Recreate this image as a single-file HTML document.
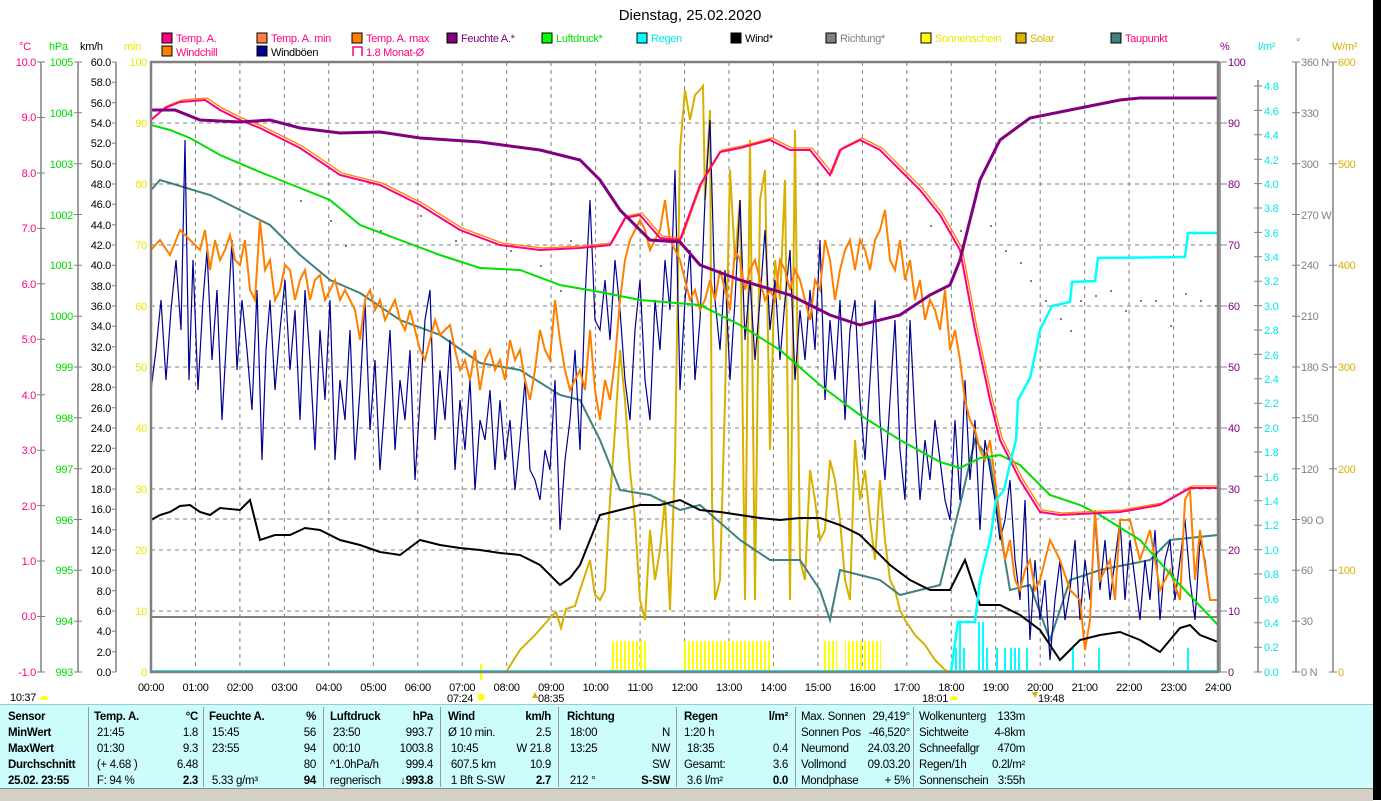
<!DOCTYPE html>
<html><head><meta charset="utf-8"><style>
html,body{margin:0;padding:0;background:#fff;width:1381px;height:800px;overflow:hidden;font-family:"Liberation Sans Narrow","Liberation Sans",sans-serif;}
svg{position:absolute;left:0;top:0}
svg text{font-family:"Liberation Sans Narrow","Liberation Sans",sans-serif;font-size:11px;letter-spacing:-0.3px}
#tbl{position:absolute;left:0;top:704px;width:1373px;height:84px;background:#ccfcfc;border-top:1px solid #9cc;}
.col{position:absolute;top:4px;font-size:11.5px;letter-spacing:-0.3px;line-height:16px;color:#000}
.row{display:flex;justify-content:space-between;white-space:nowrap;height:16px}
.b{font-weight:bold}
.sep{position:absolute;top:2px;width:1px;height:80px;background:#999}
#status{position:absolute;left:0;top:788px;width:1373px;height:12px;background:#d4d0c8;border-top:1px solid #888}
#blk{position:absolute;left:1373px;top:0;width:8px;height:800px;background:#000}
</style></head><body>
<svg width="1381" height="704" viewBox="0 0 1381 704">
<defs>
<pattern id="ys" width="4" height="10" patternUnits="userSpaceOnUse"><rect x="0" y="0" width="2" height="10" fill="#ffff00"/></pattern>
</defs>
<text x="690" y="20" text-anchor="middle" style="font-size:15px;letter-spacing:0">Dienstag, 25.02.2020</text>
<g>
<rect x="162" y="33" width="10" height="10" fill="#ff0080" stroke="#000"/><text x="176" y="42" fill="#ff0080">Temp. A.</text>
<rect x="162" y="46" width="10" height="10" fill="#ff8000" stroke="#000"/><text x="176" y="56" fill="#ff0080">Windchill</text>
<rect x="257" y="33" width="10" height="10" fill="#ff8040" stroke="#000"/><text x="271" y="42" fill="#ff0080">Temp. A. min</text>
<rect x="257" y="46" width="10" height="10" fill="#000090" stroke="#000"/><text x="271" y="56" fill="#000">Windböen</text>
<rect x="352" y="33" width="10" height="10" fill="#ff8000" stroke="#000"/><text x="366" y="42" fill="#ff0080">Temp. A. max</text>
<path d="M353 56V47H362V56" fill="none" stroke="#ff0080" stroke-width="1.5"/><text x="366" y="56" fill="#ff0080">1.8 Monat-Ø</text>
<rect x="447" y="33" width="10" height="10" fill="#800080" stroke="#000"/><text x="461" y="42" fill="#800080">Feuchte A.*</text>
<rect x="542" y="33" width="10" height="10" fill="#00ff00" stroke="#000"/><text x="556" y="42" fill="#00e000">Luftdruck*</text>
<rect x="637" y="33" width="10" height="10" fill="#00ffff" stroke="#000"/><text x="651" y="42" fill="#00e8e8">Regen</text>
<rect x="731" y="33" width="10" height="10" fill="#000" stroke="#000"/><text x="745" y="42" fill="#000">Wind*</text>
<rect x="826" y="33" width="10" height="10" fill="#808080" stroke="#000"/><text x="840" y="42" fill="#808080">Richtung*</text>
<rect x="921" y="33" width="10" height="10" fill="#ffff00" stroke="#000"/><text x="935" y="42" fill="#e8e800">Sonnenschein</text>
<rect x="1016" y="33" width="10" height="10" fill="#e0b000" stroke="#000"/><text x="1030" y="42" fill="#d8b000">Solar</text>
<rect x="1111" y="33" width="10" height="10" fill="#408080" stroke="#000"/><text x="1125" y="42" fill="#ff0080">Taupunkt</text>
</g>
<text x="19" y="50" fill="#ff0080">°C</text>
<text x="49" y="50" fill="#00e000">hPa</text>
<text x="80" y="50" fill="#000">km/h</text>
<text x="124" y="50" fill="#e8e800">min</text>
<text x="1220" y="50" fill="#800080">%</text>
<text x="1258" y="50" fill="#00e8e8">l/m²</text>
<text x="1296" y="46" fill="#808080">°</text>
<text x="1332" y="50" fill="#d8b000">W/m²</text>
<g stroke="#808080" stroke-width="1.5" fill="none">
<line x1="41" y1="62" x2="41" y2="672"/><line x1="78" y1="62" x2="78" y2="672"/><line x1="116" y1="62" x2="116" y2="672"/>
<line x1="1258" y1="80" x2="1258" y2="672"/><line x1="1296" y1="62" x2="1296" y2="672"/><line x1="1333" y1="62" x2="1333" y2="672"/>
</g>
<g stroke="#808080" stroke-width="1">
<path d="M37 62H45M37 117.5H45M37 173H45M37 228.4H45M37 283.8H45M37 339.3H45M37 394.7H45M37 450.2H45M37 505.6H45M37 561H45M37 616.5H45M37 672H45"/>
<path d="M74 62H82M74 112.8H82M74 163.7H82M74 214.5H82M74 265.3H82M74 316.2H82M74 367H82M74 417.8H82M74 468.7H82M74 519.5H82M74 570.3H82M74 621.2H82M74 672H82"/>
<path d="M1254 86H1262M1254 110.4H1262M1254 134.8H1262M1254 159.2H1262M1254 183.6H1262M1254 208H1262M1254 232.4H1262M1254 256.8H1262M1254 281.2H1262M1254 305.6H1262M1254 330H1262M1254 354.4H1262M1254 378.8H1262M1254 403.2H1262M1254 427.6H1262M1254 452H1262M1254 476.4H1262M1254 500.8H1262M1254 525.2H1262M1254 549.6H1262M1254 574H1262M1254 598.4H1262M1254 622.8H1262M1254 647.2H1262M1254 672H1262"/>
<path d="M1292 62H1300M1292 112.8H1300M1292 163.7H1300M1292 214.5H1300M1292 265.3H1300M1292 316.2H1300M1292 367H1300M1292 417.8H1300M1292 468.7H1300M1292 519.5H1300M1292 570.3H1300M1292 621.2H1300M1292 672H1300"/>
<path d="M1329 62H1337M1329 163.7H1337M1329 265.3H1337M1329 367H1337M1329 468.7H1337M1329 570.3H1337M1329 672H1337"/>
<path d="M1219 62H1227M1219 123H1227M1219 184H1227M1219 245H1227M1219 306H1227M1219 367H1227M1219 428H1227M1219 489H1227M1219 550H1227M1219 611H1227M1219 672H1227"/>
</g>
<g fill="#ff0080" text-anchor="end">
<text x="36" y="66">10.0</text><text x="36" y="121">9.0</text><text x="36" y="177">8.0</text><text x="36" y="232">7.0</text><text x="36" y="288">6.0</text><text x="36" y="343">5.0</text><text x="36" y="399">4.0</text><text x="36" y="454">3.0</text><text x="36" y="510">2.0</text><text x="36" y="565">1.0</text><text x="36" y="620">0.0</text><text x="36" y="676">-1.0</text>
</g>
<g fill="#00e000" text-anchor="end">
<text x="73" y="66">1005</text><text x="73" y="117">1004</text><text x="73" y="168">1003</text><text x="73" y="219">1002</text><text x="73" y="269">1001</text><text x="73" y="320">1000</text><text x="73" y="371">999</text><text x="73" y="422">998</text><text x="73" y="473">997</text><text x="73" y="524">996</text><text x="73" y="574">995</text><text x="73" y="625">994</text><text x="73" y="676">993</text>
</g>
<g fill="#000" text-anchor="end">
<text x="111" y="66">60.0</text><text x="111" y="86">58.0</text><text x="111" y="107">56.0</text><text x="111" y="127">54.0</text><text x="111" y="147">52.0</text><text x="111" y="168">50.0</text><text x="111" y="188">48.0</text><text x="111" y="208">46.0</text><text x="111" y="229">44.0</text><text x="111" y="249">42.0</text><text x="111" y="269">40.0</text><text x="111" y="290">38.0</text><text x="111" y="310">36.0</text><text x="111" y="330">34.0</text><text x="111" y="351">32.0</text><text x="111" y="371">30.0</text><text x="111" y="391">28.0</text><text x="111" y="412">26.0</text><text x="111" y="432">24.0</text><text x="111" y="452">22.0</text><text x="111" y="473">20.0</text><text x="111" y="493">18.0</text><text x="111" y="513">16.0</text><text x="111" y="534">14.0</text><text x="111" y="554">12.0</text><text x="111" y="574">10.0</text><text x="111" y="595">8.0</text><text x="111" y="615">6.0</text><text x="111" y="635">4.0</text><text x="111" y="656">2.0</text><text x="111" y="676">0.0</text>
</g>
<g stroke="#808080" stroke-width="1"><path d="M112 62h4M112 82.3h4M112 102.7h4M112 123h4M112 143.3h4M112 163.7h4M112 184h4M112 204.3h4M112 224.7h4M112 245h4M112 265.3h4M112 285.7h4M112 306h4M112 326.3h4M112 346.7h4M112 367h4M112 387.3h4M112 407.7h4M112 428h4M112 448.3h4M112 468.7h4M112 489h4M112 509.3h4M112 529.7h4M112 550h4M112 570.3h4M112 590.7h4M112 611h4M112 631.3h4M112 651.7h4M112 672h4"/></g>
<g fill="#e8e800" text-anchor="end">
<text x="147" y="66">100</text><text x="147" y="127">90</text><text x="147" y="188">80</text><text x="147" y="249">70</text><text x="147" y="310">60</text><text x="147" y="371">50</text><text x="147" y="432">40</text><text x="147" y="493">30</text><text x="147" y="554">20</text><text x="147" y="615">10</text><text x="147" y="676">0</text>
</g>
<g fill="#800080">
<text x="1228" y="66">100</text><text x="1228" y="127">90</text><text x="1228" y="188">80</text><text x="1228" y="249">70</text><text x="1228" y="310">60</text><text x="1228" y="371">50</text><text x="1228" y="432">40</text><text x="1228" y="493">30</text><text x="1228" y="554">20</text><text x="1228" y="615">10</text><text x="1228" y="676">0</text>
</g>
<g fill="#00e8e8">
<text x="1264" y="90">4.8</text><text x="1264" y="115">4.6</text><text x="1264" y="139">4.4</text><text x="1264" y="164">4.2</text><text x="1264" y="188">4.0</text><text x="1264" y="212">3.8</text><text x="1264" y="237">3.6</text><text x="1264" y="261">3.4</text><text x="1264" y="285">3.2</text><text x="1264" y="310">3.0</text><text x="1264" y="334">2.8</text><text x="1264" y="359">2.6</text><text x="1264" y="383">2.4</text><text x="1264" y="407">2.2</text><text x="1264" y="432">2.0</text><text x="1264" y="456">1.8</text><text x="1264" y="481">1.6</text><text x="1264" y="505">1.4</text><text x="1264" y="529">1.2</text><text x="1264" y="554">1.0</text><text x="1264" y="578">0.8</text><text x="1264" y="603">0.6</text><text x="1264" y="627">0.4</text><text x="1264" y="651">0.2</text><text x="1264" y="676">0.0</text>
</g>
<g fill="#808080">
<text x="1301" y="66">360 N</text><text x="1301" y="117">330</text><text x="1301" y="168">300</text><text x="1301" y="219">270 W</text><text x="1301" y="269">240</text><text x="1301" y="320">210</text><text x="1301" y="371">180 S</text><text x="1301" y="422">150</text><text x="1301" y="473">120</text><text x="1301" y="524">90 O</text><text x="1301" y="574">60</text><text x="1301" y="625">30</text><text x="1301" y="676">0 N</text>
</g>
<g fill="#d8b000">
<text x="1338" y="66">600</text><text x="1338" y="168">500</text><text x="1338" y="269">400</text><text x="1338" y="371">300</text><text x="1338" y="473">200</text><text x="1338" y="574">100</text><text x="1338" y="676">0</text>
</g>
<g stroke="#808080" stroke-width="1" stroke-dasharray="4,4">
<path d="M151 123H1218M151 184H1218M151 245H1218M151 306H1218M151 367H1218M151 428H1218M151 489H1218M151 550H1218M151 611H1218M151 519H1218"/>
<path d="M195.5 62V672M239.9 62V672M284.4 62V672M328.8 62V672M373.3 62V672M417.8 62V672M462.2 62V672M506.7 62V672M551.1 62V672M595.6 62V672M640.1 62V672M684.5 62V672M729 62V672M773.4 62V672M817.9 62V672M862.4 62V672M906.8 62V672M951.3 62V672M995.7 62V672M1040.2 62V672M1084.7 62V672M1129.1 62V672M1173.6 62V672"/>
</g>
<line x1="151" y1="617" x2="1218" y2="617" stroke="#808080" stroke-width="2"/>
<rect x="611" y="641" width="36" height="31" fill="url(#ys)"/>
<rect x="682" y="641" width="90" height="31" fill="url(#ys)"/>
<rect x="823" y="641" width="14" height="31" fill="url(#ys)"/>
<rect x="845" y="641" width="36" height="31" fill="url(#ys)"/>
<line x1="481" y1="664" x2="481" y2="680" stroke="#ffff00" stroke-width="2"/>
<g fill="#00ffff">
<rect x="955" y="648" width="2" height="24"/><rect x="959" y="622" width="2" height="50"/><rect x="963" y="648" width="2" height="24"/>
<rect x="978" y="622" width="2" height="50"/><rect x="982" y="622" width="2" height="50"/><rect x="986" y="648" width="2" height="24"/>
<rect x="996" y="648" width="2" height="24"/><rect x="1004" y="648" width="2" height="24"/><rect x="1010" y="648" width="2" height="24"/><rect x="1014" y="648" width="2" height="24"/><rect x="1018" y="648" width="2" height="24"/><rect x="1026" y="648" width="2" height="24"/>
<rect x="1072" y="648" width="2" height="24"/><rect x="1098" y="648" width="2" height="24"/><rect x="1187" y="648" width="2" height="24"/>
</g>
<line x1="151" y1="671" x2="1218" y2="671" stroke="#00ffff" stroke-width="2"/>
<g fill="#808080">
<rect x="300" y="200" width="2" height="2"/><rect x="330" y="220" width="2" height="2"/><rect x="345" y="245" width="2" height="2"/><rect x="380" y="230" width="2" height="2"/><rect x="420" y="215" width="2" height="2"/><rect x="455" y="240" width="2" height="2"/><rect x="510" y="250" width="2" height="2"/><rect x="540" y="265" width="2" height="2"/><rect x="570" y="240" width="2" height="2"/><rect x="560" y="290" width="2" height="2"/>
<rect x="930" y="225" width="2" height="2"/><rect x="960" y="230" width="2" height="2"/><rect x="990" y="225" width="2" height="2"/><rect x="1005" y="250" width="2" height="2"/><rect x="1020" y="262" width="2" height="2"/><rect x="1030" y="280" width="2" height="2"/><rect x="1045" y="300" width="2" height="2"/><rect x="1060" y="318" width="2" height="2"/><rect x="1070" y="330" width="2" height="2"/><rect x="1080" y="300" width="2" height="2"/><rect x="1095" y="295" width="2" height="2"/><rect x="1110" y="290" width="2" height="2"/><rect x="1125" y="310" width="2" height="2"/><rect x="1140" y="300" width="2" height="2"/><rect x="1155" y="300" width="2" height="2"/><rect x="1170" y="325" width="2" height="2"/><rect x="1185" y="293" width="2" height="2"/><rect x="1200" y="300" width="2" height="2"/><rect x="1215" y="305" width="2" height="2"/>
</g>
<polyline fill="none" stroke="#d8b000" stroke-width="2" points="506,672 520,650 535,635 550,618 556,612 561,628 566,609 575,606 580,590 590,560 595,595 600,600 605,590 610,500 615,430 620,350 625,400 630,470 635,520 640,600 645,620 650,530 655,580 660,550 665,500 670,610 675,460 680,150 685,90 690,120 695,95 700,90 703,86 705,200 710,110 712,500 715,600 720,580 725,400 730,170 735,260 740,200 745,600 750,140 755,600 760,200 765,170 770,450 775,260 780,300 785,180 790,600 795,130 800,560 805,580 810,470 815,500 820,540 825,530 830,460 835,480 840,520 845,580 850,600 855,440 860,500 865,470 870,520 875,560 880,480 885,540 890,580 895,590 900,610 905,620 915,635 925,645 935,660 945,670 950,672"/>
<polyline fill="none" stroke="#408080" stroke-width="2" points="151,190 160,180 180,186 210,195 240,210 270,225 300,255 330,280 360,293 400,320 440,335 480,363 520,370 560,395 580,400 600,440 620,490 650,495 680,510 700,505 740,540 770,560 800,560 820,590 830,620 840,570 880,580 900,595 940,585 960,505 975,440 990,460 1000,530 1010,590 1030,585 1050,640 1070,580 1100,570 1150,560 1170,540 1218,535"/>
<polyline fill="none" stroke="#000090" stroke-width="1.2" points="151,390 156,350 161,300 166,380 171,310 176,260 181,330 185,140 189,380 193,260 198,390 203,300 207,250 212,360 217,290 222,420 227,330 232,240 237,370 242,300 247,350 252,410 257,290 262,460 266,350 270,300 275,390 280,330 285,280 290,370 295,310 300,420 305,290 310,360 315,450 320,330 325,400 330,300 335,460 340,380 345,420 350,330 355,460 360,390 365,300 370,430 375,360 380,470 385,400 390,330 395,450 400,380 405,420 410,350 415,480 420,400 425,320 430,290 435,440 440,370 445,420 450,340 455,470 460,400 465,450 470,380 475,490 480,420 485,440 490,390 495,470 500,400 505,460 510,420 515,490 520,440 525,380 530,470 535,480 540,500 545,450 550,470 555,380 560,530 565,460 570,420 575,350 580,450 585,300 590,200 595,320 600,330 605,280 610,340 615,260 620,310 625,380 630,420 635,330 640,280 645,380 650,420 655,300 660,350 665,260 670,310 675,170 680,390 685,300 690,250 695,380 700,320 705,200 710,120 715,300 720,350 725,270 730,380 735,300 740,200 745,340 750,280 755,360 760,300 765,230 770,330 775,280 780,360 785,300 790,250 795,380 800,310 805,360 810,290 815,350 820,240 825,400 830,320 835,380 840,300 845,420 850,330 855,300 860,400 865,460 870,380 875,300 880,420 885,480 890,400 895,320 900,450 905,500 910,320 915,420 920,500 925,440 930,480 935,420 940,460 945,500 950,520 955,420 960,500 965,380 970,480 975,420 980,530 985,440 990,470 995,500 1000,540 1005,520 1010,480 1015,560 1020,600 1025,500 1030,640 1035,560 1040,620 1045,580 1050,660 1055,600 1060,560 1065,620 1070,590 1075,540 1080,620 1085,560 1090,600 1095,520 1100,590 1105,540 1110,600 1115,560 1120,520 1125,600 1130,540 1135,580 1140,620 1145,560 1150,600 1155,530 1160,620 1165,560 1170,540 1175,600 1180,560 1185,520 1190,580 1195,620 1200,540 1205,560 1210,600 1215,600"/>
<polyline fill="none" stroke="#ff8000" stroke-width="2" points="151,250 160,240 170,255 180,230 190,240 200,250 205,230 210,270 215,240 220,260 225,250 230,235 235,260 240,265 245,240 250,290 255,300 260,220 265,270 270,260 275,300 280,290 285,265 290,270 295,300 300,280 305,270 310,300 315,280 320,275 325,300 330,290 335,280 340,300 345,290 350,300 355,310 360,340 365,300 370,290 375,310 380,300 385,320 390,310 395,300 400,320 405,330 410,310 415,330 420,350 425,360 430,340 435,320 440,335 445,330 450,325 455,350 460,370 465,360 470,380 475,350 480,390 485,360 490,350 495,370 500,360 505,380 510,340 515,360 520,350 525,380 530,400 535,370 540,330 545,350 550,360 555,300 560,340 565,370 570,390 575,380 580,370 585,390 590,330 595,390 600,420 605,380 610,400 615,360 620,300 625,260 630,240 635,230 640,220 645,230 650,250 655,240 660,230 665,200 670,240 675,250 680,260 685,280 690,300 695,290 700,310 705,300 710,280 715,300 720,270 725,290 730,310 735,250 740,260 745,290 750,270 755,260 760,280 765,300 770,290 775,300 780,260 785,270 790,290 795,270 800,280 805,300 810,320 815,280 820,290 825,240 830,260 835,300 840,270 845,250 850,240 855,270 860,240 865,250 870,270 875,240 880,230 885,210 890,260 895,270 900,240 905,280 910,260 915,300 920,280 925,320 930,300 935,310 940,330 945,290 950,350 955,330 960,360 965,400 970,420 975,430 980,450 985,460 990,440 995,480 1000,520 1005,560 1010,540 1015,580 1020,590 1025,570 1030,560 1035,590 1040,580 1050,540 1060,560 1070,590 1080,600 1085,650 1090,620 1095,510 1100,580 1110,560 1115,600 1120,520 1130,520 1140,560 1150,530 1160,590 1170,570 1180,600 1185,500 1190,490 1195,580 1200,530 1210,600 1218,600"/>
<polyline fill="none" stroke="#000" stroke-width="2" points="151,520 160,515 170,512 180,506 190,505 200,512 210,515 220,508 240,510 250,500 260,540 275,535 290,535 305,528 320,530 340,540 360,545 380,552 400,555 420,540 440,545 460,548 480,550 500,553 520,555 540,565 560,585 570,578 580,565 600,515 620,510 640,505 660,505 680,500 700,510 720,512 740,515 760,518 780,520 800,518 820,518 840,525 860,535 875,550 890,565 910,580 930,590 950,590 965,560 975,590 980,605 1000,605 1020,615 1040,630 1060,660 1070,650 1080,640 1100,635 1120,632 1140,640 1160,652 1170,640 1180,628 1190,625 1200,635 1218,642"/>
<polyline fill="none" stroke="#00e000" stroke-width="2" points="151,125 170,130 190,138 220,155 260,172 300,188 330,200 360,225 400,240 440,255 480,268 520,270 560,285 600,292 640,300 700,305 740,325 780,350 820,385 860,415 900,440 940,462 960,468 980,458 1000,455 1020,465 1050,495 1080,505 1100,515 1140,540 1180,585 1218,625"/>
<polyline fill="none" stroke="#ff8000" stroke-width="1.3" points="153,118 167,106 182,100 207,98 222,108 242,118 262,126 282,136 302,146 342,173 382,183 422,203 462,228 502,243 542,248 582,246 612,243 627,216 642,213 662,236 682,238 702,183 722,150 742,146 772,138 792,148 812,148 832,173 842,148 862,138 882,148 902,168 922,188 942,213 962,248 977,328 992,398 1002,438 1022,478 1042,510 1062,513 1122,510 1162,503 1192,486 1218,486"/>
<polyline fill="none" stroke="#ff0080" stroke-width="2" points="151,120 165,108 180,102 205,100 220,110 240,120 260,128 280,138 300,148 340,175 380,185 420,205 460,230 500,245 540,250 580,248 610,245 625,218 640,215 660,238 680,240 700,185 720,152 740,148 770,140 790,150 810,150 830,175 840,150 860,140 880,150 900,170 920,190 940,215 960,250 975,330 990,400 1000,440 1020,480 1040,512 1060,515 1120,512 1160,505 1190,488 1218,488"/>
<polyline fill="none" stroke="#800080" stroke-width="3" points="151,110 175,110 200,120 240,122 270,120 300,128 340,133 380,132 420,138 480,142 540,150 580,160 600,180 620,210 650,240 680,242 700,265 740,280 790,295 830,315 860,325 900,315 930,295 950,285 960,260 980,180 1000,140 1030,118 1080,108 1120,100 1140,98 1218,98"/>
<polyline fill="none" stroke="#00ffff" stroke-width="2.5" points="951,672 958,622 975,622 980,580 990,540 996,500 1004,490 1012,455 1016,440 1018,400 1030,378 1035,355 1040,330 1052,306 1070,302 1072,282 1095,281 1098,258 1185,257 1188,233 1218,233"/>
<rect x="151" y="62" width="1067" height="610" fill="none" stroke="#808080" stroke-width="2.5"/>
<line x1="1220" y1="62" x2="1220" y2="672" stroke="#808080" stroke-width="1.5"/>
<g fill="#000" text-anchor="middle">
<text x="151" y="691">00:00</text><text x="195.5" y="691">01:00</text><text x="239.9" y="691">02:00</text><text x="284.4" y="691">03:00</text><text x="328.8" y="691">04:00</text><text x="373.3" y="691">05:00</text><text x="417.8" y="691">06:00</text><text x="462.2" y="691">07:00</text><text x="506.7" y="691">08:00</text><text x="551.1" y="691">09:00</text><text x="595.6" y="691">10:00</text><text x="640.1" y="691">11:00</text><text x="684.5" y="691">12:00</text><text x="729" y="691">13:00</text><text x="773.4" y="691">14:00</text><text x="817.9" y="691">15:00</text><text x="862.4" y="691">16:00</text><text x="906.8" y="691">17:00</text><text x="951.3" y="691">18:00</text><text x="995.7" y="691">19:00</text><text x="1040.2" y="691">20:00</text><text x="1084.7" y="691">21:00</text><text x="1129.1" y="691">22:00</text><text x="1173.6" y="691">23:00</text><text x="1218" y="691">24:00</text>
</g>
<g fill="#000">
<text x="10" y="701">10:37</text><path d="M40 700a4 4 0 0 1 8 0z" fill="#ffff00"/>
<text x="447" y="702">07:24</text><circle cx="481" cy="697" r="3.5" fill="#ffff00"/>
<text x="538" y="702">08:35</text><path d="M535 692l-3 6h6z" fill="#d8b000"/>
<text x="922" y="702">18:01</text><path d="M950 700a4 4 0 0 1 8 0z" fill="#ffff00"/>
<text x="1038" y="702">19:48</text><path d="M1032 692l3 6l3-6z" fill="#d8b000"/>
</g>
</svg>
<div id="tbl">
<div class="col" style="left:8px;width:77px">
<div class="row b">Sensor</div><div class="row b">MinWert</div><div class="row b">MaxWert</div><div class="row b">Durchschnitt</div><div class="row b">25.02. 23:55</div></div>
<div class="sep" style="left:88px"></div>
<div class="col" style="left:94px;width:104px">
<div class="row b"><span>Temp. A.</span><span>°C</span></div><div class="row"><span>&nbsp;21:45</span><span>1.8</span></div><div class="row"><span>&nbsp;01:30</span><span>9.3</span></div><div class="row"><span>&nbsp;(+ 4.68 )</span><span>6.48</span></div><div class="row"><span>&nbsp;F: 94 %</span><span class="b">2.3</span></div></div>
<div class="sep" style="left:203px"></div>
<div class="col" style="left:209px;width:107px">
<div class="row b"><span>Feuchte A.</span><span>%</span></div><div class="row"><span>&nbsp;15:45</span><span>56</span></div><div class="row"><span>&nbsp;23:55</span><span>94</span></div><div class="row"><span></span><span>80</span></div><div class="row"><span>&nbsp;5.33 g/m³</span><span class="b">94</span></div></div>
<div class="sep" style="left:323px"></div>
<div class="col" style="left:330px;width:103px">
<div class="row b"><span>Luftdruck</span><span>hPa</span></div><div class="row"><span>&nbsp;23:50</span><span>993.7</span></div><div class="row"><span>&nbsp;00:10</span><span>1003.8</span></div><div class="row"><span>^1.0hPa/h</span><span>999.4</span></div><div class="row"><span>regnerisch</span><span class="b">↓993.8</span></div></div>
<div class="sep" style="left:440px"></div>
<div class="col" style="left:448px;width:103px">
<div class="row b"><span>Wind</span><span>km/h</span></div><div class="row"><span>Ø 10 min.</span><span>2.5</span></div><div class="row"><span>&nbsp;10:45</span><span>W 21.8</span></div><div class="row"><span>&nbsp;607.5 km</span><span>10.9</span></div><div class="row"><span>&nbsp;1 Bft S-SW</span><span class="b">2.7</span></div></div>
<div class="sep" style="left:558px"></div>
<div class="col" style="left:567px;width:103px">
<div class="row b"><span>Richtung</span><span></span></div><div class="row"><span>&nbsp;18:00</span><span>N</span></div><div class="row"><span>&nbsp;13:25</span><span>NW</span></div><div class="row"><span></span><span>SW</span></div><div class="row"><span>&nbsp;212 °</span><span class="b">S-SW</span></div></div>
<div class="sep" style="left:676px"></div>
<div class="col" style="left:684px;width:104px">
<div class="row b"><span>Regen</span><span>l/m²</span></div><div class="row"><span>1:20 h</span><span></span></div><div class="row"><span>&nbsp;18:35</span><span>0.4</span></div><div class="row"><span>Gesamt:</span><span>3.6</span></div><div class="row"><span>&nbsp;3.6 l/m²</span><span class="b">0.0</span></div></div>
<div class="sep" style="left:795px"></div>
<div class="col" style="left:801px;width:109px">
<div class="row"><span>Max. Sonnen</span><span>29,419°</span></div><div class="row"><span>Sonnen Pos</span><span>-46,520°</span></div><div class="row"><span>Neumond</span><span>24.03.20</span></div><div class="row"><span>Vollmond</span><span>09.03.20</span></div><div class="row"><span>Mondphase</span><span>+ 5%</span></div></div>
<div class="sep" style="left:913px"></div>
<div class="col" style="left:919px;width:106px">
<div class="row"><span>Wolkenunterg</span><span>133m</span></div><div class="row"><span>Sichtweite</span><span>4-8km</span></div><div class="row"><span>Schneefallgr</span><span>470m</span></div><div class="row"><span>Regen/1h</span><span>0.2l/m²</span></div><div class="row"><span>Sonnenschein</span><span>3:55h</span></div></div>
</div>
<div id="status"></div>
<div id="blk"></div>
</body></html>
